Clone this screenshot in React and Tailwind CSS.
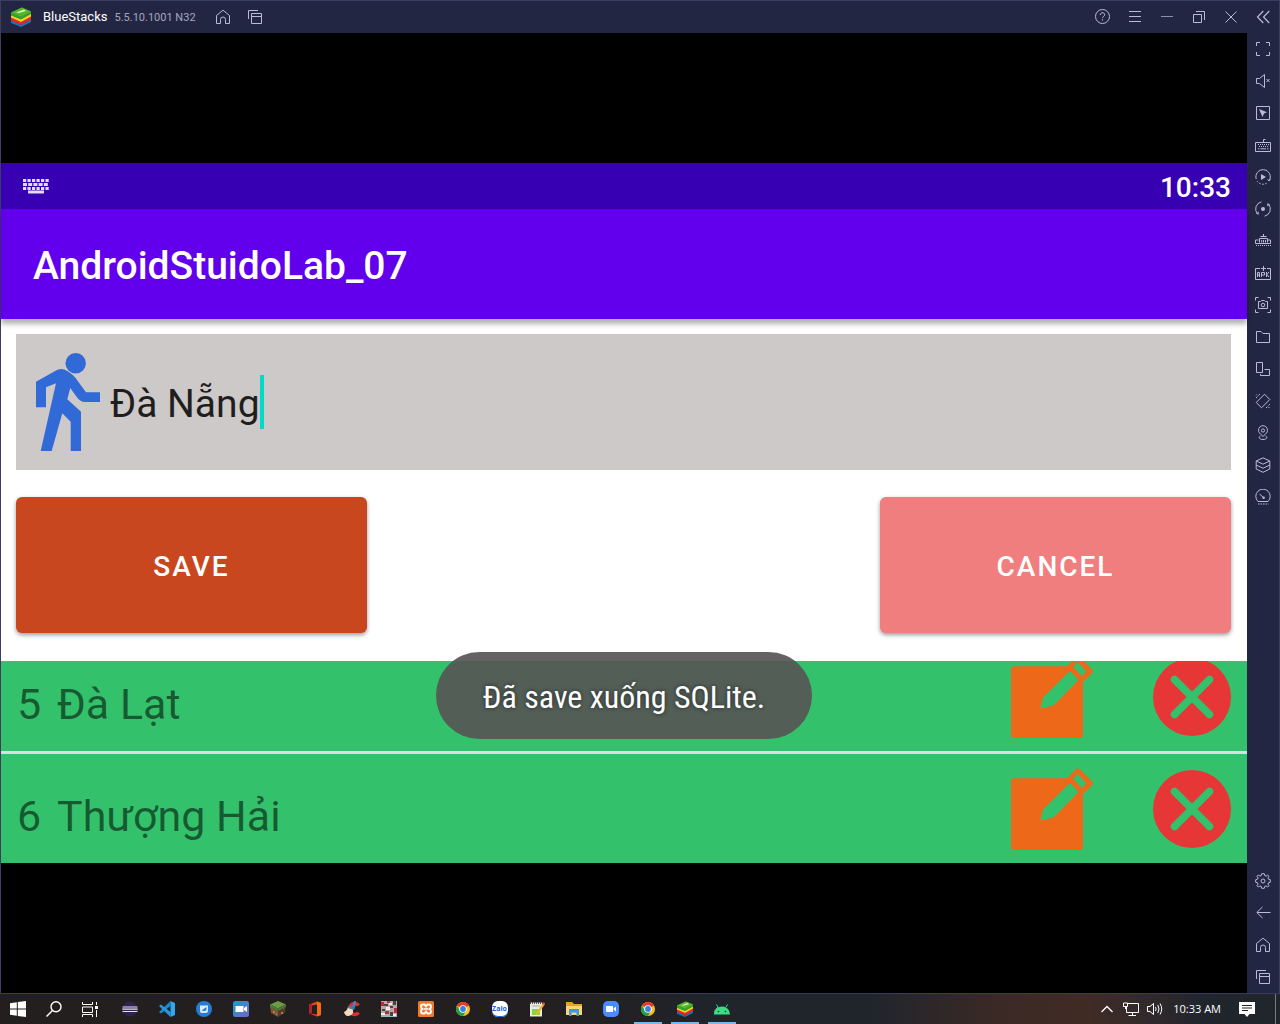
import { useState } from "react";

function Icon({ size = 16, children, className = "" }) {
  return (
    <svg width={size} height={size} viewBox={`0 0 ${size} ${size}`} fill="none" stroke="currentColor" strokeWidth="1" className={className} aria-hidden="true">
      {children}
    </svg>
  );
}

const HomeIcon = () => (
  <Icon><path d="M1.5 6.5V14.5H5.5V10.5A2.5 2.5 0 0 1 10.5 10.5V14.5H14.5V6.5L8 1.2Z" strokeLinejoin="round" /></Icon>
);
const WindowsIcon = () => (
  <Icon><path d="M1.5 10V1.5H11M4.5 4.5H14.5V14.5H4.5ZM4.5 7.5H14.5" /></Icon>
);

const titleButtons = [
  ["Help", <Icon key="i"><circle cx="7.5" cy="7.5" r="7" /><path d="M5.3 6C5.3 3 9.7 3 9.7 5.8C9.7 7.4 7.5 7.3 7.5 9.1M7.5 10.300V11.600" /></Icon>],
  ["Menu", <Icon key="i"><path d="M2 2.5H14M2 7.5H14M2 12.5H14" strokeWidth="1.2" /></Icon>],
  ["Minimize", <Icon key="i"><path d="M2 7.5H14" opacity=".7" /></Icon>],
  ["Restore", <Icon key="i"><path d="M2.5 5.5H10.5V13.5H2.5ZM5 2.5H13.5V11" /></Icon>],
  ["Close", <Icon key="i"><path d="M2.5 2.5L13.5 13.5M13.5 2.5L2.5 13.5" /></Icon>],
  ["Collapse sidebar", <Icon key="i"><path d="M8.300 2L2.500 8L8.300 14M14.300 2L8.500 8L14.300 14" strokeWidth="1.2" /></Icon>],
];

const sideButtons = [
  ["Full screen", <Icon key="i"><path d="M1.5 5V1.5H5M11 1.5H14.5V5M14.5 11V14.5H11M5 14.5H1.5V11" /></Icon>],
  ["Mute", <Icon key="i"><path d="M1.5 5.5H4.5L9.5 1.5V14.5L4.5 10.5H1.5ZM11.5 6L14.5 9M14.5 6L11.5 9" /></Icon>],
  ["Lock cursor", <Icon key="i"><path d="M1.5 1.5H14.5V14.5H1.5Z" /><path d="M4 4L12 7.200L9 8.600L7.500 12Z" fill="currentColor" stroke="none" /></Icon>],
  ["Game controls", <Icon key="i"><path d="M.5 5.5H15.5V14.5H.5ZM8.5 5.5V2.5H10.5" /><path d="M3 7.5H14M4 9.5H13" strokeDasharray="1 1" /><path d="M3 11.8H4.5M5.5 11.8H11M12 11.8H13.5" /></Icon>],
  ["Macros", <Icon key="i"><path d="M1.2 10A7.2 7.2 0 1 1 14.3 11.5M15.3 9.8L14 12L12.8 10.3" /><path d="M2 12A7.2 7.2 0 0 0 12.6 13.6" strokeDasharray="1.6 1.4" /><path d="M6 5L11 8L6 11Z" fill="currentColor" stroke="none" /></Icon>],
  ["Sync", <Icon key="i"><path d="M6.5 .8A7.3 7.3 0 0 0 2.5 12.8M9.5 15.2A7.3 7.3 0 0 0 13.5 3.2M1 11.6L3.2 13.4V10.8M15 4.4L12.8 2.6V5.2" /><circle cx="8" cy="8" r="2" fill="currentColor" stroke="none" /></Icon>],
  ["Memory trim", <Icon key="i"><path d="M8.5 1V4M5.5 3.5H11.5M4.5 9.5V5.5H12.5V9.5M6.7 9.5V7M8.5 9.5V7M10.5 9.5V7M.5 7V10.5H15.5V7H13M3.5 7H.5" /><path d="M1 12.5H16" strokeDasharray="1 1" /></Icon>],
  ["Install APK", <Icon key="i"><path d="M5 3.5H.5V14.5H15.5V3.5H12M8.5 1V6M6 3.5H11" /><path d="M2.5 12V7.5H4.5V12M2.5 10H4.5M6.5 12V7.5H9.5V10H6.5M11.5 7V12M14 7L12 9.5L14 12" /></Icon>],
  ["Screenshot", <Icon key="i"><path d="M.5 3.5V.5H3.5M12.5 .5H15.5V3.5M15.5 12.5V15.5H12.5M3.5 15.5H.5V12.5M3.5 4.5H5.5L6.5 3.5H9.5L10.5 4.5H12.5V11.5H3.5Z" /><circle cx="8" cy="8" r="1.8" /></Icon>],
  ["Media folder", <Icon key="i"><path d="M1.5 13.5V2.5H6L8 4.5H14.5V13.5Z" strokeLinejoin="round" /></Icon>],
  ["Rotate", <Icon key="i"><path d="M1.5 1.5H7.5V11.5H1.5ZM9.5 8.5H14.5V14.5H5.5V13" /></Icon>],
  ["Shake", <Icon key="i"><path d="M9.5 1.2L14.8 6.5L6.5 14.8L1.2 9.5Z" strokeLinejoin="round" /><path d="M1 5L5 1M1 2.5L2.5 1M11 15L15 11M13.5 15L15 13.5" strokeDasharray="1.4 .8" /></Icon>],
  ["Location", <Icon key="i"><path d="M8 11.5C5 8.5 3.5 7.5 3.5 5.2A4.5 4.5 0 0 1 12.5 5.2C12.5 7.5 11 8.5 8 11.5Z" /><circle cx="8" cy="5.5" r="1.6" /><path d="M5.5 11C3 12 4 14.5 8 14.5S13 12 10.5 11" /></Icon>],
  ["Multi-instance", <Icon key="i"><path d="M8 .8L14.8 4L8 7.2L1.2 4ZM1.2 4V12L8 15.3L14.8 12V4M1.2 8L8 11.2L14.8 8" strokeLinejoin="round" /></Icon>],
  ["Performance", <Icon key="i"><path d="M3 12.5A7.2 7.2 0 1 1 13 12.5ZM8.5 8.5L4.5 5" /><circle cx="8.6" cy="8.8" r="1.3" fill="currentColor" stroke="none" /><path d="M3 15H13.5" strokeDasharray="1.5 1" /></Icon>],
];

const navButtons = [
  ["Settings", <Icon key="i"><circle cx="8" cy="8" r="2" /><path d="M6.7 .7H9.3L9.8 2.7L11 3.2L12.7 2.1L14 3.4L12.9 5.1L13.4 6.2L15.3 6.7V9.3L13.4 9.8L12.9 11L14 12.7L12.7 14L11 12.9L9.8 13.4L9.3 15.3H6.7L6.2 13.4L5 12.9L3.3 14L2 12.7L3.1 11L2.6 9.8L.7 9.3V6.7L2.6 6.2L3.1 5L2 3.3L3.3 2L5 3.1L6.2 2.6Z" strokeLinejoin="round" /></Icon>],
  ["Back", <Icon key="i"><path d="M15.5 7.5H2M7.5 2L1.8 7.5L7.5 13" /></Icon>],
  ["Home", <HomeIcon key="i" />],
  ["Recent apps", <WindowsIcon key="i" />],
];

function BarButton({ label, children }) {
  return (
    <button type="button" aria-label={label} className="flex h-8 w-8 shrink-0 items-center justify-center text-[#b9bbd9]">
      {children}
    </button>
  );
}

function StacksLogo({ size }) {
  return (
    <svg width={size} height={size} viewBox="0 0 20 20" aria-hidden="true">
      <path d="M0 13L10 18L20 12V15L10 20L0 16Z" fill="#1674bd" />
      <path d="M0 10L10 15L20 9V12.5L10 18L0 13.5Z" fill="#e8242b" />
      <path d="M0 8L10 12L20 6.500V9.500L10 15L0 10.500Z" fill="#ffd21c" />
      <path d="M0 5.500L11 .5L20 4.500V7L10 12.500L0 8.500Z" fill="#2fa32c" />
      <path d="M0 5.500L11 .5L20 4.500L10 9.500Z" fill="#58b52a" />
      <path d="M5 5.500L13 2.500L15 4L8 6Z" fill="#d8f2c0" />
    </svg>
  );
}

function TitleBar() {
  return (
    <header className="flex h-8 shrink-0 items-center bg-[#232642]">
      <div className="flex w-[42px] shrink-0 pl-[10px]"><StacksLogo size={20} /></div>
      <h1 className="flex w-[164px] shrink-0 items-baseline gap-[7px] whitespace-nowrap text-[13px] text-white">
        BlueStacks <span className="text-[11px] text-[#a3a5c0]">5.5.10.1001 N32</span>
      </h1>
      <BarButton label="Home"><HomeIcon /></BarButton>
      <BarButton label="Recent apps"><WindowsIcon /></BarButton>
      <div className="flex-1" />
      {titleButtons.map(([label, icon]) => <BarButton key={label} label={label}>{icon}</BarButton>)}
    </header>
  );
}

function WalkIcon() {
  return (
    <svg width="64" height="98" viewBox="0 0 64 98" fill="#3169d6" className="shrink-0" aria-hidden="true">
      <circle cx="39.700" cy="10.300" r="10.200" />
      <path d="M20 17.500L0 28.700V54.300H10V34.300L20 30.300L4.700 98H15.700L26.300 60.300L34.700 68.700V98H45V58.700L31.300 46.300L34.300 35L40 43Q44 49 49 49H64V39.300H50L42.300 28.700Q37 20.500 29 16.700Q24 14.800 20 17.500Z" />
    </svg>
  );
}

function EditIcon() {
  return (
    <svg width="82" height="82" viewBox="0 0 82 82" aria-hidden="true">
      <path fill="#ee6819" fillRule="evenodd" d="M3 10.300H56.300L64.500 1.500Q66.700 -.7 69 1.500L80.700 13Q83 15.300 80.700 17.500L72 26V79Q72 82 69 82H3Q0 82 0 79V13.300Q0 10.300 3 10.300ZM59 14.700L32.300 41.300L29.300 52.300L41 50Q43 49 44 48L67.700 23.700ZM66.700 6L62 10.700L71 20.300L75.300 15.300Z" />
    </svg>
  );
}

function DeleteIcon() {
  return (
    <svg width="78" height="78" viewBox="0 0 78 78" aria-hidden="true">
      <circle cx="39" cy="39" r="39" fill="#e73636" />
      <path d="M21.500 21.500L56.500 56.500M56.500 21.500L21.500 56.500" stroke="#33c26b" strokeWidth="7.500" strokeLinecap="round" />
    </svg>
  );
}

function PlaceRow({ id, name }) {
  return (
    <li className="flex h-[109px] shrink-0 items-center bg-[#33c26b] px-4 text-[43px] text-black/54">
      <span className="w-10 shrink-0 pt-4">{id}</span>
      <span className="flex-1 pt-4">{name}</span>
      <button type="button" aria-label={`Edit ${name}`} className="mr-[60px] shrink-0"><EditIcon /></button>
      <button type="button" aria-label={`Delete ${name}`} className="shrink-0"><DeleteIcon /></button>
    </li>
  );
}

function Device() {
  const [place, setPlace] = useState("Đà Nẵng");
  return (
    <section className="relative bg-white font-[Roboto,sans-serif]">
      <div className="flex h-[46px] items-center justify-between bg-[#3700b3] pl-[21px] pr-4 text-white">
        <svg width="28" height="16" viewBox="0 0 28 16" stroke="#e4dcf5" fill="none" aria-hidden="true">
          <path d="M1 2.500H27M1 10.500H27" strokeWidth="3" strokeDasharray="3.200 1.300" />
          <path d="M1 6.500H27" strokeWidth="3" strokeDasharray="4 1.200" />
          <path d="M6 14H22" strokeWidth="3" />
        </svg>
        <span className="pt-1 text-[28px] font-medium leading-none">10:33</span>
      </div>
      <div className="relative flex h-[110px] items-center bg-[#6200ee] pl-8 text-[39px] font-medium text-white shadow-[0_5px_5px_rgba(0,0,0,0.3)]">
        <h2 className="pt-1 leading-none">AndroidStuidoLab_07</h2>
      </div>
      <div className="flex flex-col gap-[27px] px-[15px] pb-7 pt-[15px]">
        <label className="mr-px flex h-[136px] items-center bg-[#cdc9c8] pl-5 text-[39px] text-[#1f1e1e]">
          <WalkIcon />
          <input
            aria-label="Place"
            value={place}
            onChange={(e) => setPlace(e.target.value)}
            className="field-sizing-content ml-[10px] h-16 bg-transparent pt-1 caret-transparent outline-none"
          />
          <span className="h-[54px] w-1 bg-[#03dac5]" />
        </label>
        <div className="mr-px flex justify-between text-[28px] font-medium tracking-[2px] text-white">
          <button type="button" className="h-[136px] w-[351px] rounded-md bg-[#c9471f] pt-1 shadow-[0_2px_4px_rgba(0,0,0,0.4)]">SAVE</button>
          <button type="button" className="h-[136px] w-[351px] rounded-md bg-[#f17e7e] pt-1 shadow-[0_2px_4px_rgba(0,0,0,0.4)]">CANCEL</button>
        </div>
      </div>
      <ul className="flex h-[202px] flex-col justify-end gap-[3px] overflow-hidden bg-[#dedede]">
        <PlaceRow id="5" name="Đà Lạt" />
        <PlaceRow id="6" name="Thượng Hải" />
      </ul>
      <div role="status" className="absolute bottom-[124px] left-1/2 flex h-[87px] w-[376px] -translate-x-1/2 items-center justify-center rounded-full bg-[#565656]/92 pt-[2px] font-['Roboto_Condensed',Roboto,sans-serif] text-[32px] text-white [text-shadow:0_0_4px_rgba(0,0,0,0.6)]">
        Đã save xuống SQLite.
      </div>
    </section>
  );
}

function ChromeLogo() {
  return (
    <svg width="16" height="16" viewBox="0 0 16 16" aria-hidden="true">
      <circle cx="8" cy="8" r="7" fill="#fbc116" />
      <path d="M8 8L1.900 4.500A7 7 0 0 1 14.100 4.500Z" fill="#e33b2e" />
      <path d="M1.900 4.500A7 7 0 0 0 8 15L11 9.700L5 9.700Z" fill="#229d50" />
      <circle cx="8" cy="8" r="3.800" fill="#fff" />
      <circle cx="8" cy="8" r="2.900" fill="#3b7de9" />
    </svg>
  );
}

const S = ({ children }) => <svg width="16" height="16" viewBox="0 0 16 16" aria-hidden="true">{children}</svg>;

const systemButtons = [
  ["Start", <S key="i"><path d="M0 2.200L6.800 1.200V7.500H0ZM7.800 1L16 0V7.500H7.800ZM0 8.500H6.800V14.800L0 13.800ZM7.800 8.500H16V16L7.800 15Z" fill="#fff" /></S>],
  ["Search", <S key="i"><g fill="none" stroke="#fff" strokeWidth="1.400"><circle cx="10" cy="5.700" r="5" /><path d="M6.500 9.500L.5 15.500" /></g></S>],
  ["Task view", <S key="i"><path d="M.5 1V3.500H10.500V1M.5 6H10.500V11.500H.5V6M.5 16V13.500H10.500V16M14.500 1V4M14.500 9V16" fill="none" stroke="#fff" /><path d="M13 5H16V8H13Z" fill="#fff" /></S>],
];

const taskApps = [
  ["Eclipse", <S key="i"><circle cx="8" cy="8" r="7.500" fill="#2c2255" /><path d="M.5 6H15.500M.3 8.200H15.700M.5 10.500H15.500" stroke="#e5e1ee" strokeWidth="1.200" /></S>],
  ["Visual Studio Code", <S key="i"><path d="M11.500 0L16 2V14L11.500 16Z" fill="#31a9f0" /><path d="M11.500 0V5L2 12.500L0 11Z" fill="#168bd2" /><path d="M0 5L2 3.500L11.500 11V16Z" fill="#2599df" /></S>],
  ["Messenger", <S key="i"><circle cx="8" cy="8" r="8" fill="#277bd4" /><path d="M4 4.500H12V9.500Q12 12 9.500 12H6Q4 12 4 10Z" fill="#d9ecfb" /><path d="M5.500 9.500L10.500 6V8Q10.500 10 8.500 10Z" fill="#277bd4" /></S>],
  ["Video call", <S key="i"><defs><linearGradient id="video" x2="1" y2="1"><stop stopColor="#169fc5" /><stop offset="1" stopColor="#7563cc" /></linearGradient></defs><rect width="16" height="16" rx="2.500" fill="url(#video)" /><path d="M2.500 5H10.500V11H2.500ZM11 7L14 5V11L11 9Z" fill="#fff" /></S>],
  ["Minecraft", <S key="i"><path d="M8 0L16 3.500L8 7.500L0 3.500Z" fill="#6a9c45" /><path d="M0 3.500L8 7.500V16L1 12Z" fill="#79553a" /><path d="M16 3.500L8 7.500V16L15 12Z" fill="#543a2a" /><path d="M0 3.500L8 7.500L16 3.500V6L14 6.500V8L12 7.500L10 9.500L8 9L6 9.500L4 7L2 7.500L0 6Z" fill="#4b7a34" /><path d="M3 10H5V12H3ZM6 12H7V14H6ZM11 11H13V13H11Z" fill="#a77b55" /></S>],
  ["Office", <S key="i"><path d="M2 3.500L10 .5L14 2V14L10 15.500L2 12.500L10 13.500V3.500L5 4.500V11.500L2 12.500Z" fill="#e9421b" /><path d="M10 .5L14 2V14L10 15.500Z" fill="#f36c12" /><path d="M2 3.500L5 2.500V11.500L2 12.500Z" fill="#b91d34" /></S>],
  ["CCleaner", <S key="i"><path d="M14.500 4.500A5 5.500 0 1 0 14.500 11.500" fill="none" stroke="#df302a" strokeWidth="3.600" /><path d="M8 6L10 0H12L11 7Z" fill="#3a87c7" /><path d="M4 6L9 8L9 12Q7 15.500 4 15Q1 15 0 11Q3 10 4 6Z" fill="#f3dcbc" /><path d="M5 4.500L11 7L9.500 9L4 7Z" fill="#3a7db8" /></S>],
  ["Game", <S key="i"><path d="M0 0H16V16H0Z" fill="#bba8a8" /><path d="M0 1H3V5H0ZM4 10H8V13H4ZM13 7H16V12H13ZM6 0H9V2H6Z" fill="#b4303f" /><path d="M3 3H7V5H3ZM9 5H12V7H9ZM1 8H4V10H1ZM9 11H12V15H9ZM12 0H15V4H12Z" fill="#46414b" /><path d="M5 6H9V9H5ZM0 12H4V14H0ZM12 13H15V15H12ZM8 2H11V4H8Z" fill="#f8ece5" /><path d="M0 15.500H16" stroke="#72d5dc" strokeDasharray="2 2" /></S>],
  ["XAMPP", <S key="i"><rect width="16" height="16" rx="1.500" fill="#ee792b" /><path d="M5 3.500H6.500L8 5.500L9.500 3.500H11Q13 3.500 13 5.500Q13 7.300 11.500 8Q13 8.700 13 10.500Q13 12.500 11 12.500H9.500L8 10.500L6.500 12.500H5Q3 12.500 3 10.500Q3 8.700 4.500 8Q3 7.300 3 5.500Q3 3.500 5 3.500Z" fill="none" stroke="#fff" strokeWidth="1.900" /><path d="M6 8H10" stroke="#fff" strokeWidth="1.500" /></S>],
  ["Chrome", <ChromeLogo key="i" />],
  ["Zalo", <span key="i" className="flex h-4 w-4 items-center justify-center rounded-[6px] bg-white font-['Open_Sans',sans-serif] text-[7px] font-bold text-[#1769e0] shadow-[inset_0_-1px_0_#1769e0]">Zalo</span>],
  ["Notepad++", <S key="i"><path d="M1 1.500H13V15.500H1Z" fill="#e9ecdf" /><path d="M1 2H13" stroke="#555" strokeWidth="2" strokeDasharray="1 1" /><path d="M3 8H11V14H3Z" fill="#8ad33b" /><path d="M3 5H11" stroke="#aaa" /><path d="M7 12L14 2L16 3L9 13L6.500 14Z" fill="#f0b32c" /><path d="M13 3L14 1L16 2L15.500 4Z" fill="#dc403c" /></S>],
  ["File Explorer", <S key="i"><path d="M0 1H6L8 3H16V14H0Z" fill="#e7a51c" /><path d="M0 5H16V14H0Z" fill="#ffd66d" /><path d="M3 8H13V15H10.500V11.500H5.500V15H3Z" fill="#3e9ada" /></S>],
  ["Zoom", <S key="i"><rect width="16" height="16" rx="5" fill="#4a8cff" /><path d="M3 5H9Q10 5 10 6V11H4Q3 11 3 10ZM10.500 7.500L13 5.500V10.500L10.500 8.500Z" fill="#fff" /></S>],
  ["Chrome window", <ChromeLogo key="i" />, true],
  ["BlueStacks", <StacksLogo key="i" size={16} />, true],
  ["Android emulator", <S key="i"><path d="M0 13.500Q.5 8 4 6.200L2.500 3.500M12 6.200L13.500 3.500" stroke="#3ddc84" fill="none" /><path d="M0 13.500A8 8 0 0 1 16 13.500Z" fill="#3ddc84" /><circle cx="4.500" cy="10.500" r=".8" fill="#202525" /><circle cx="11.500" cy="10.500" r=".8" fill="#202525" /></S>, true],
];

function Taskbar() {
  return (
    <footer className="flex h-[31px] shrink-0 items-center border-t border-[#383b5c] bg-[linear-gradient(90deg,#231f1f_0%,#231f20_42%,#20242b_56%,#20252c_68%,#3b2925_78%,#402b25_85%,#342a2b_89%,#20252d_94%,#20262c_100%)] text-white">
      {systemButtons.map(([label, icon]) => (
        <button key={label} type="button" aria-label={label} className="flex h-full w-9 shrink-0 items-center justify-center">
          {icon}
        </button>
      ))}
      <div className="flex h-full pl-[3px]">
        {taskApps.map(([label, icon, active]) => (
          <button
            key={label}
            type="button"
            aria-label={label}
            className="relative flex h-full w-[37px] shrink-0 items-center justify-center"
          >
            {icon}
            {active && <span className="absolute bottom-0 left-1/2 h-[2px] w-7 -translate-x-1/2 bg-[#76b9ed]" />}
          </button>
        ))}
      </div>
      <div className="flex-1" />
      <button type="button" aria-label="Show hidden icons" className="mr-2"><Icon><path d="M2.500 11L8 5.500L13.500 11" strokeWidth="1.300" /></Icon></button>
      <button type="button" aria-label="Network" className="mr-2"><Icon><path d="M5 2.500H15.500V11.500H3.500V6M9.500 11.500V14.500M5.500 14.500H13M.5 2H4.500V5.500H.5ZM2.500 5.500V8" /></Icon></button>
      <button type="button" aria-label="Volume" className="mr-[10px]"><Icon><path d="M.5 5.500H3L6.500 2.500V13.500L3 10.500H.5ZM8.500 6Q9.800 8 8.500 10M10.800 4Q13.200 8 10.800 12M13 2.500Q16.500 8 13 13.500" /></Icon></button>
      <time className="mr-[18px] whitespace-nowrap font-['Open_Sans',sans-serif] text-[11px]">10:33 AM</time>
      <button type="button" aria-label="Notifications" className="mr-5"><S><path d="M0 1H16V13H10.500L8 16L5.500 13H0Z" fill="#fff" /><path d="M3 4.500H13M3 7H13M3 9.500H9" stroke="#20252d" /></S></button>
      <button type="button" aria-label="Show desktop" className="h-full w-[5px] border-l border-[#777b80]" />
    </footer>
  );
}

export default function App() {
  return (
    <div className="flex h-screen flex-col overflow-hidden bg-black font-[Roboto,sans-serif]">
      <div className="flex min-h-0 flex-1 flex-col border-l border-r border-t border-[#3a3d60]">
        <TitleBar />
        <div className="flex min-h-0 flex-1">
          <main className="flex min-w-0 flex-1 flex-col justify-center bg-black"><Device /></main>
          <aside className="flex w-8 shrink-0 flex-col justify-between bg-[#232642]">
            <div>{sideButtons.map(([label, icon]) => <BarButton key={label} label={label}>{icon}</BarButton>)}</div>
            <div>{navButtons.map(([label, icon]) => <BarButton key={label} label={label}>{icon}</BarButton>)}</div>
          </aside>
        </div>
      </div>
      <Taskbar />
    </div>
  );
}
